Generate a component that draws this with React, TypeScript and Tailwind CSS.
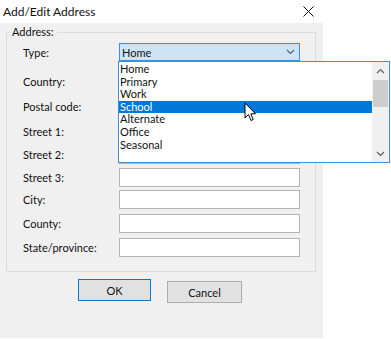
const rows = [
  { label: 'Type:', mt: 'mt-0', combo: true },
  { label: 'Country:', mt: 'mt-[11px]' },
  { label: 'Postal code:', mt: 'mt-[6px]' },
  { label: 'Street 1:', mt: 'mt-[6px]' },
  { label: 'Street 2:', mt: 'mt-[4px]' },
  { label: 'Street 3:', mt: 'mt-[4px]' },
  { label: 'City:', mt: 'mt-[3px]' },
  { label: 'County:', mt: 'mt-[5px]' },
  { label: 'State/province:', mt: 'mt-[5px]' },
]

const options = ['Home', 'Primary', 'Work', 'School', 'Alternate', 'Office', 'Seasonal']

function Chevron({ up = false }: { up?: boolean }) {
  return (
    <svg width="9" height="6" viewBox="0 0 9 6" className={up ? 'rotate-180' : ''}>
      <path d="M1 1 L4.5 4.5 L8 1" fill="none" stroke="#606060" strokeWidth="1.2" />
    </svg>
  )
}

export default function App() {
  return (
    <div className="relative w-[391px] h-[339px] bg-white overflow-hidden text-[11px] text-[#111] [font-family:'Segoe_UI','Lato',sans-serif]">
      {/* title bar */}
      <div className="flex items-center justify-between h-[23px] pl-[3px] pr-[77px]">
        <span className="text-[12px] leading-none">Add/Edit Address</span>
        <svg width="11" height="11" viewBox="0 0 11 11">
          <path d="M0.5 0.5 L10.5 10.5 M10.5 0.5 L0.5 10.5" stroke="#111" strokeWidth="1" />
        </svg>
      </div>

      {/* dialog body */}
      <div className="w-[323px] h-[315px] bg-[#f0f0f0] pt-[9px] pl-[6px]">
        <div className="relative w-[310px] border border-[#dcdcdc] pt-[10px] pb-[14px] pl-[16px] pr-[15px]">
          <span className="absolute left-[2px] top-[-9px] px-[3px] bg-[#f0f0f0] leading-[16px]">Address:</span>
          {rows.map((r) => (
            <div key={r.label} className={`flex items-center ${r.mt}`}>
              <span className="w-[96px] leading-none">{r.label}</span>
              {r.combo ? (
                <div className="flex items-center justify-between w-[181px] h-[18px] bg-[#cce4f7] border border-[#3c8fd8] pl-[2px] pr-[4px]">
                  <span className="leading-none">Home</span>
                  <Chevron />
                </div>
              ) : (
                <div className="w-[181px] h-[19px] bg-white border border-[#b4b4b4]" />
              )}
            </div>
          ))}
        </div>

        <div className="flex items-start gap-[16px] pl-[72px] mt-[7px]">
          <button className="w-[73px] h-[22px] bg-[#e1e1e1] border border-[#0078d7] leading-none">OK</button>
          <button className="mt-[2px] w-[75px] h-[22px] bg-[#e1e1e1] border border-[#adadad] leading-none">Cancel</button>
        </div>
      </div>

      {/* open dropdown list */}
      <div className="absolute left-[118px] top-[61px] w-[272px] h-[102px] bg-white border border-[#3c8fd8] flex">
        <div className="flex-1 pt-[1px]">
          {options.map((o) => (
            <div
              key={o}
              className={`h-[12.6px] pl-[1px] leading-[12.6px] ${o === 'School' ? 'bg-[#0078d7] text-white' : ''}`}
            >
              {o}
            </div>
          ))}
        </div>
        <div className="w-[17px] h-full bg-[#f0f0f0] flex flex-col items-center">
          <div className="h-[18px] flex items-center justify-center">
            <Chevron up />
          </div>
          <div className="w-[15px] h-[27px] bg-[#cdcdcd]" />
          <div className="flex-1" />
          <div className="h-[17px] flex items-center justify-center">
            <Chevron />
          </div>
        </div>
      </div>

      {/* mouse cursor */}
      <svg className="absolute left-[244px] top-[102px]" width="14" height="21" viewBox="0 0 14 21">
        <path
          d="M1 1 L1 16 L4.5 12.5 L7 18.5 L9.2 17.5 L6.8 11.8 L11.5 11.8 Z"
          fill="#fff"
          stroke="#000"
          strokeWidth="1"
          strokeLinejoin="miter"
        />
      </svg>
    </div>
  )
}
